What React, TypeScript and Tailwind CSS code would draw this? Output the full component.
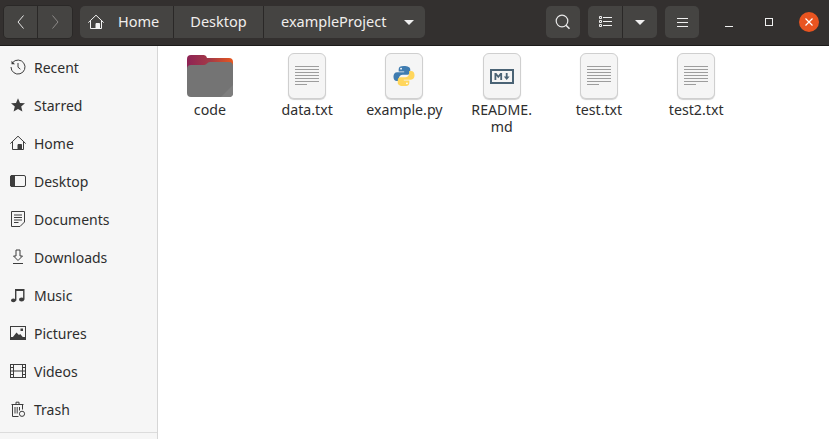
import React from "react";

const ico = "w-4 h-4 shrink-0 text-[#3d3d3d]";

const Recent = () => (
  <svg viewBox="0 0 16 16" className={ico} fill="none" stroke="currentColor" strokeWidth="1">
    <path d="M2.600 3.600A7 7 0 1 1 1 8" />
    <path d="M1.500 1.800 L5 5.200 L1.500 5.200 Z" fill="currentColor" stroke="none" />
    <path d="M8 4v4.200l2.400 2" />
  </svg>
);
const Star = () => (
  <svg viewBox="0 0 16 16" className={ico} fill="currentColor">
    <path d="M8 1.200l2 4.700 5 .4-3.800 3.300 1.200 5L8 11.900l-4.400 2.700 1.200-5L1 6.300l5-.4z" />
  </svg>
);
const HomeI = ({ c = "text-[#3d3d3d]" }: { c?: string }) => (
  <svg viewBox="0 0 16 16" className={`w-4 h-4 shrink-0 ${c}`} fill="none" stroke="currentColor" strokeWidth="1">
    <path d="M0.300 8.600 8 1.200l7.700 7.400" />
    <path d="M2.500 7v7.500h11V7" />
    <path d="M8 9.500h3.500v5H8z" fill="currentColor" />
  </svg>
);
const DesktopI = () => (
  <svg viewBox="0 0 16 16" className={ico} fill="none" stroke="currentColor" strokeWidth="1">
    <rect x="0.500" y="2.500" width="15" height="11" rx="1.500" />
    <path d="M2 2.500h2.500v11H2a1.500 1.500 0 0 1-1.500-1.500V4A1.500 1.500 0 0 1 2 2.500z" fill="currentColor" />
  </svg>
);
const Docs = () => (
  <svg viewBox="0 0 16 16" className={ico} fill="none" stroke="currentColor" strokeWidth="1">
    <path d="M1.500 0.500h13v10.500l-4.500 4.500h-8.500z" />
    <path d="M4 4h8M4 6.500h8M4 9h8M4 11.500h4.500" />
  </svg>
);
const Down = () => (
  <svg viewBox="0 0 16 16" className={ico} fill="none" stroke="currentColor" strokeWidth="1">
    <path d="M6 1h4v6h2.500L8 11.500 3.500 7H6z" />
    <path d="M3 14.500h10" />
  </svg>
);
const Music = () => (
  <svg viewBox="0 0 16 16" className={ico} fill="currentColor">
    <path d="M5 2h9.500v10.500h-1.400V4H6.400v9.500H5z" />
    <ellipse cx="3.400" cy="13.300" rx="2.400" ry="1.900" />
    <ellipse cx="11.600" cy="12.500" rx="2.600" ry="1.900" />
  </svg>
);
const Pics = () => (
  <svg viewBox="0 0 16 16" className={ico} fill="none" stroke="currentColor" strokeWidth="1">
    <rect x="0.500" y="1.500" width="15" height="13" />
    <path d="M2.500 12.500 6.500 7.500 9 10l1.200-1 3 3.500z" fill="currentColor" stroke="none" />
    <rect x="10.500" y="3.500" width="2.500" height="2.500" fill="currentColor" stroke="none" />
    <rect x="0.500" y="12.500" width="15" height="2" fill="currentColor" />
  </svg>
);
const Videos = () => (
  <svg viewBox="0 0 16 16" className={ico} fill="none" stroke="currentColor" strokeWidth="1">
    <rect x="0.500" y="1.500" width="15" height="13" />
    <path d="M3.500 1.500v13M12.500 1.500v13M3.500 8h9M0.500 4.500h3M0.500 8h3M0.500 11.500h3M12.500 4.500h3M12.500 8h3M12.500 11.500h3" />
  </svg>
);
const Trash = () => (
  <svg viewBox="0 0 16 16" className={ico} fill="none" stroke="currentColor" strokeWidth="1">
    <path d="M1.500 3.500h12M6 3V1.200h3V3" />
    <path d="M2.500 4v11.500h6M12.500 4v4.500" />
    <path d="M5 6v6.500M7.200 6v6.500M9.500 6v3.500" />
    <circle cx="12" cy="12.800" r="2.600" />
  </svg>
);

const places: [string, React.ReactNode][] = [
  ["Recent", <Recent />],
  ["Starred", <Star />],
  ["Home", <HomeI />],
  ["Desktop", <DesktopI />],
  ["Documents", <Docs />],
  ["Downloads", <Down />],
  ["Music", <Music />],
  ["Pictures", <Pics />],
  ["Videos", <Videos />],
  ["Trash", <Trash />],
];

const Tile = ({ children }: { children?: React.ReactNode }) => (
  <div className="w-[38px] h-[46px] rounded-[6px] border border-[#cfcfcf] bg-[#f5f5f5] shadow-[0_1px_1px_rgba(0,0,0,0.18)] flex items-center justify-center">
    {children}
  </div>
);

const TextLines = () => (
  <svg width="24" height="20" viewBox="0 0 24 20" stroke="#9d9d9d" strokeWidth="1">
    <path d="M0 .5h24M0 3.500h24M0 6.500h24M0 9.500h24M0 12.500h24M0 15.500h24M0 18.500h12" />
  </svg>
);

const Folder = () => (
  <svg width="46" height="42" viewBox="0 0 46 42">
    <defs>
      <linearGradient id="fg" x1="0" x2="1" y1="0" y2="0">
        <stop offset="0" stopColor="#8e2355" />
        <stop offset="0.5" stopColor="#a43a47" />
        <stop offset="1" stopColor="#e8581f" />
      </linearGradient>
    </defs>
    <path d="M0 4a4 4 0 0 1 4-4h12a4 4 0 0 1 4 3h22a4 4 0 0 1 4 4v10H0z" fill="url(#fg)" />
    <path d="M0 14a4 4 0 0 1 4-4h13c3 0 3-3 6-3h19a4 4 0 0 1 4 4v27a4 4 0 0 1-4 4H4a4 4 0 0 1-4-4z" fill="#747474" />
    <path d="M46 30v8a4 4 0 0 1-4 4h-8z" fill="#7e7e7e" />
  </svg>
);

const Py = () => (
  <svg width="22" height="22" viewBox="0 0 24 24">
    <path d="M11.800 1C8 1 6.200 2.200 6.200 4.500V7h6v1H4.500C2 8 .5 10 .5 12.800c0 3 1.600 4.700 3.700 4.700h2.200v-2.800c0-2.300 2-4 4.200-4h5.200c1.700 0 3-1.400 3-3V4.500C18.800 2.400 16.200 1 11.800 1z" fill="#3f7cb0" />
    <path d="M12.200 23c3.800 0 5.600-1.200 5.600-3.500V17h-6v-1h7.700c2.500 0 4-2 4-4.800 0-3-1.600-4.700-3.700-4.700h-2.200v2.800c0 2.300-2 4-4.200 4H8.200c-1.700 0-3 1.400-3 3v3.200C5.200 21.600 7.800 23 12.200 23z" fill="#ffd65c" />
    <circle cx="8.800" cy="4" r="1" fill="#fff" />
    <circle cx="15.200" cy="20" r="1" fill="#fff" />
  </svg>
);

const Md = () => (
  <svg width="24" height="15" viewBox="0 0 24 15">
    <rect x="1" y="1" width="22" height="13" fill="none" stroke="#4a6375" strokeWidth="2" />
    <path d="M4.500 11V4h1.800l2 2.600 2-2.600h1.800v7h-1.800V6.800l-2 2.500-2-2.500V11z" fill="#4a6375" />
    <path d="M15.800 4h1.800v3.500h2L16.700 11l-2.900-3.500h2z" fill="#4a6375" />
  </svg>
);

const files: { name: React.ReactNode; icon: React.ReactNode }[] = [
  { name: "code", icon: <Folder /> },
  { name: "data.txt", icon: <Tile><TextLines /></Tile> },
  { name: "example.py", icon: <Tile><Py /></Tile> },
  { name: <>README.<br />md</>, icon: <Tile><Md /></Tile> },
  { name: "test.txt", icon: <Tile><TextLines /></Tile> },
  { name: "test2.txt", icon: <Tile><TextLines /></Tile> },
];

const Caret = () => <div className="w-0 h-0 border-x-[5px] border-x-transparent border-t-[5px] border-t-[#f0f0f0]" />;

const btn = "bg-[#454442] h-[32px] flex items-center justify-center";

export default function App() {
  return (
    <div className="w-[829px] h-[439px] flex flex-col overflow-hidden bg-white text-[14.5px] font-['Noto_Sans','Open_Sans',sans-serif]">
      <header className="h-[46px] shrink-0 bg-[#33302f] border-b border-[#1c1b1a] flex items-center pl-[3px] pr-[8px] pb-[1px] text-[#f0eeec]">
        <div className="flex rounded-[5px] overflow-hidden border border-[#2a2827]">
          <div className={`${btn} w-[34px] border-r border-[#2a2827]`}>
            <svg width="8" height="14" viewBox="0 0 8 14" fill="none" stroke="#e8e8e8"><path d="M6.500 .5 1 7l5.500 6.500" /></svg>
          </div>
          <div className={`${btn} w-[34px] bg-[#3c3a38]`}>
            <svg width="8" height="14" viewBox="0 0 8 14" fill="none" stroke="#8d8b89"><path d="M1.500 .5 7 7l-5.500 6.500" /></svg>
          </div>
        </div>
        <div className="ml-[7px] flex rounded-[5px] overflow-hidden h-[32px] bg-[#454442]">
          <div className="w-[94px] flex items-center pl-[8px] border-r border-[#2a2827]">
            <HomeI c="text-[#f2f2f2]" />
            <span className="ml-[14px]">Home</span>
          </div>
          <div className="w-[90px] flex items-center justify-center border-r border-[#2a2827]">Desktop</div>
          <div className="w-[161px] flex items-center pl-[17px]">
            <span>exampleProject</span>
            <div className="ml-auto mr-[11px]"><Caret /></div>
          </div>
        </div>
        <div className="ml-[121px] w-[34px] h-[32px] rounded-[5px] bg-[#454442] flex items-center justify-center">
          <svg width="16" height="16" viewBox="0 0 16 16" fill="none" stroke="#e8e8e8" strokeWidth="1.200"><circle cx="7" cy="7" r="5.800" /><path d="M11 11.200l3.500 3.500" strokeWidth="1.600" /></svg>
        </div>
        <div className="ml-[8px] flex rounded-[5px] overflow-hidden h-[32px] bg-[#454442]">
          <div className="w-[35px] flex items-center justify-center border-r border-[#2a2827]">
            <svg width="13" height="12" viewBox="0 0 13 12" fill="none" stroke="#f0f0f0"><path d="M.500.500h2v2h-2zM.500 4.500h2v2h-2zM.500 8.500h2v2h-2zM4 1.500h9M4 5.500h9M4 9.500h9" /></svg>
          </div>
          <div className="w-[34px] flex items-center justify-center"><Caret /></div>
        </div>
        <div className="ml-[8px] w-[34px] h-[32px] rounded-[5px] bg-[#454442] flex items-center justify-center">
          <svg width="11" height="11" viewBox="0 0 11 11" fill="none" stroke="#f0f0f0"><path d="M0 1.500h11M0 5.500h11M0 9.500h11" /></svg>
        </div>
        <div className="ml-[25px] w-[10px] h-[32px] flex items-center justify-center">
          <div className="w-[8px] h-[1px] bg-[#f0f0f0] mt-[9px]" />
        </div>
        <div className="ml-[30px] w-[10px] h-[32px] flex items-center justify-center">
          <div className="w-[8px] h-[8px] border border-[#f0f0f0]" />
        </div>
        <div className="ml-[25px] w-[20px] h-[20px] rounded-full bg-[#e95420] flex items-center justify-center">
          <svg width="8" height="8" viewBox="0 0 8 8" stroke="#fff" strokeWidth="1.200"><path d="M.500.500l7 7M7.500.500l-7 7" /></svg>
        </div>
      </header>
      <div className="flex-1 flex min-h-0">
        <aside className="w-[158px] shrink-0 bg-[#f6f6f6] border-r border-[#d6d6d6] pt-[2px] flex flex-col text-[14px]">
          <div className="h-[385px] border-b border-[#dcdcdc]">
            {places.map(([n, i]) => (
              <div key={n} className="h-[38px] flex items-center pl-[10px] gap-[8px] text-[#2e2e2e]">
                {i}
                <span>{n}</span>
              </div>
            ))}
          </div>
        </aside>
        <main className="flex-1 pl-[3.3px] pt-[7px] flex items-start text-[#2e2e2e] text-[14.2px]">
          {files.map((f, i) => (
            <div key={i} className="w-[97.25px] flex flex-col items-center">
              <div className="h-[46px] flex items-center justify-center">{f.icon}</div>
              <div className="mt-[2px] text-center leading-[17px]">{f.name}</div>
            </div>
          ))}
        </main>
      </div>
    </div>
  );
}
